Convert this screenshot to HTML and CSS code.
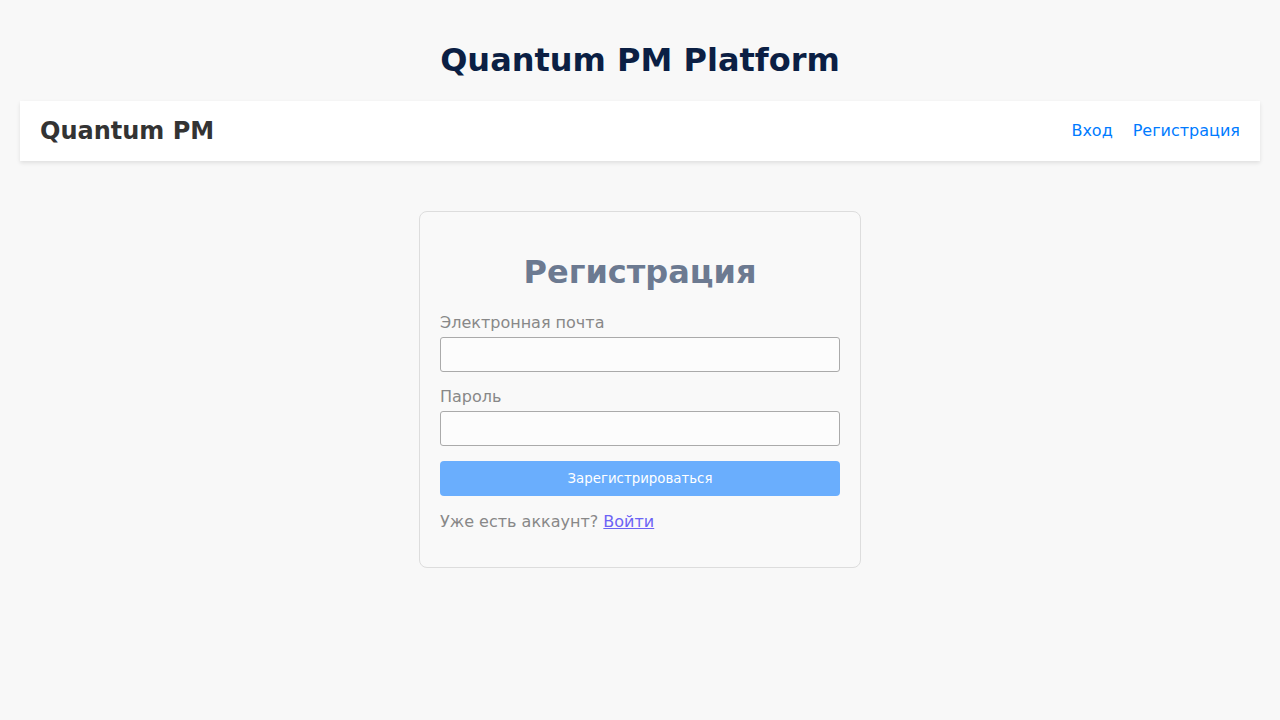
FILE: index.html
```html
<!DOCTYPE html>
<html lang="ru">
<head>
<meta charset="utf-8">
<title>Quantum PM Platform</title>
<link rel="stylesheet" href="styles.css">
</head>
<body>
<h1 class="page-title">Quantum PM Platform</h1>
<nav class="navbar">
  <div class="brand">Quantum PM</div>
  <div class="nav-links">
    <a href="#" class="nav-link">Вход</a>
    <a href="#" class="nav-link">Регистрация</a>
  </div>
</nav>
<main class="main">
  <form class="card">
    <h2 class="card-title">Регистрация</h2>
    <div class="field">
      <label class="label" for="email">Электронная почта</label>
      <input class="input" id="email" type="email">
    </div>
    <div class="field">
      <label class="label" for="password">Пароль</label>
      <input class="input" id="password" type="password">
    </div>
    <button class="btn" type="button">Зарегистрироваться</button>
    <p class="alt">Уже есть аккаунт? <a href="#" class="alt-link">Войти</a></p>
  </form>
</main>
</body>
</html>
```
FILE: styles.css
```css
* { box-sizing: border-box; }
html, body { margin: 0; }
body {
  padding: 20px;
  background: #f8f8f8;
  font-family: "DejaVu Sans", sans-serif;
  color: #333;
}
.page-title {
  margin: 0.67em 0;
  font-size: 32px;
  font-weight: bold;
  text-align: center;
  color: #0b1f44;
}
.navbar {
  display: flex;
  justify-content: space-between;
  align-items: center;
  height: 60px;
  padding: 0 20px;
  background: #fff;
  box-shadow: 0 2px 4px rgba(0,0,0,0.1);
}
.brand {
  font-size: 24px;
  font-weight: bold;
  color: #333;
}
.nav-links {
  display: flex;
  gap: 20px;
}
.nav-link {
  font-size: 16px;
  color: #007bff;
  text-decoration: none;
}
.main {
  padding-top: 50px;
}
.card {
  width: 442px;
  margin: 0 auto;
  padding: 20px;
  border: 1px solid #ddd;
  border-radius: 8px;
  background: #f9f9f9;
}
.card-title {
  margin: 0.67em 0;
  font-size: 32px;
  font-weight: bold;
  text-align: center;
  color: #6c7a91;
}
.field {
  margin-bottom: 15px;
}
.label {
  display: block;
  margin-bottom: 5px;
  font-size: 16px;
  color: #888;
}
.input {
  display: block;
  width: 100%;
  height: 35px;
  padding: 8px;
  border: 1px solid #aaa;
  border-radius: 3px;
  background: #fcfcfc;
  font-family: "DejaVu Sans", sans-serif;
  font-size: 14px;
}
.btn {
  display: block;
  width: 100%;
  height: 35px;
  border: none;
  border-radius: 4px;
  background: #6aaefd;
  color: #fff;
  font-family: "DejaVu Sans", sans-serif;
  font-size: 13.333px;
}
.alt {
  margin: 16px 0;
  font-size: 16px;
  color: #888;
}
.alt-link {
  color: #6c63f5;
}
```
